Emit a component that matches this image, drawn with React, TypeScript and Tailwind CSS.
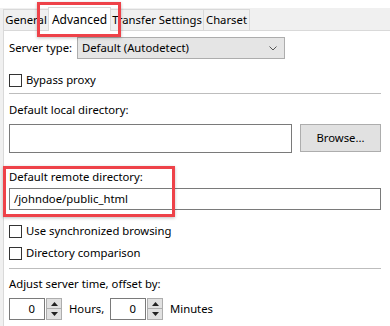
const FONT = { fontFamily: '"Noto Sans", "Open Sans", sans-serif' };

function Checkbox({ label, className = "" }: { label: string; className?: string }) {
  return (
    <div className={`flex h-[16px] items-center ${className}`}>
      <span className="h-[13px] w-[13px] border border-[#333333] bg-white" />
      <span className="ml-[4px] leading-[16px]">{label}</span>
    </div>
  );
}

function Spinner({ value }: { value: string }) {
  return (
    <div className="flex h-[22px]">
      <div className="flex h-[22px] w-[36px] items-center justify-end border border-[#7a7a7a] bg-white pr-[9px]">
        {value}
      </div>
      <div className="ml-[1px] flex w-[16px] flex-col">
        <div className="flex h-[11px] items-center justify-center border border-[#adadad] bg-[#e1e1e1]">
          <svg width="7" height="4" viewBox="0 0 7 4">
            <path d="M3.5 0L7 4H0z" fill="#222" />
          </svg>
        </div>
        <div className="flex h-[11px] items-center justify-center border border-t-0 border-[#adadad] bg-[#e1e1e1]">
          <svg width="7" height="4" viewBox="0 0 7 4">
            <path d="M0 0h7L3.5 4z" fill="#222" />
          </svg>
        </div>
      </div>
    </div>
  );
}

export default function App() {
  const tabs = [
    { name: "General", w: "w-[46px]" },
    { name: "Advanced", w: "w-[63px]", active: true },
    { name: "Transfer Settings", w: "w-[94px]" },
    { name: "Charset", w: "w-[47px]" },
  ];

  return (
    <div className="relative h-[326px] w-[390px] overflow-hidden bg-white text-[11.3px] text-black" style={FONT}>
      <div className="mt-[8px] h-[318px] bg-[#f0f0f0] pl-[3px]">
        {/* tab strip */}
        <div className="flex h-[22px] items-end">
          {tabs.map((t) =>
            t.active ? (
              <div
                key={t.name}
                className={`relative z-10 -mt-[2px] -ml-[1px] flex h-[24px] ${t.w} -mb-[1px] items-center justify-center whitespace-nowrap border border-b-0 border-[#d9d9d9] bg-white text-[12px] leading-[16px]`}
              >
                {t.name}
              </div>
            ) : (
              <div
                key={t.name}
                className={`flex h-[21px] ${t.w} -ml-[1px] first:ml-0 items-center justify-center whitespace-nowrap border border-b-0 border-[#d9d9d9] bg-[#f0f0f0] leading-[16px]`}
              >
                {t.name}
              </div>
            )
          )}
        </div>

        {/* panel */}
        <div className="h-[300px] border-l border-t border-[#d9d9d9] bg-white pl-[5px] pr-[9px] pt-[6px]">
          <div className="flex h-[22px] items-center">
            <span className="w-[68px] leading-[16px]">Server type:</span>
            <div className="flex h-[22px] w-[208px] items-center justify-between border border-[#adadad] bg-[#e5e5e5] pl-[4px] pr-[7px]">
              <span>Default (Autodetect)</span>
              <svg width="8" height="5" viewBox="0 0 8 5">
                <path d="M0.5 0.5L4 4L7.5 0.5" fill="none" stroke="#555" strokeWidth="1" />
              </svg>
            </div>
          </div>

          <Checkbox label="Bypass proxy" className="mt-[13px]" />

          <div className="mt-[5px] h-px bg-[#bdbdbd]" />

          <div className="mt-[8px] h-[16px] leading-[16px]">Default local directory:</div>
          <div className="mt-[6px] flex h-[29px]">
            <div className="h-[29px] flex-1 border border-[#7a7a7a] bg-white" />
            <div className="ml-[8px] flex h-[28px] w-[81px] items-center justify-center border border-[#adadad] bg-[#e1e1e1]">
              Browse...
            </div>
          </div>

          <div className="mt-[16px] h-[16px] leading-[16px]">Default remote directory:</div>
          <div className="mt-[3px] flex h-[22px] items-center border border-[#7a7a7a] bg-white pl-[4px]">
            /johndoe/public_html
          </div>

          <Checkbox label="Use synchronized browsing" className="mt-[13px]" />
          <Checkbox label="Directory comparison" className="mt-[6px]" />

          <div className="mt-[7px] h-px bg-[#bdbdbd]" />

          <div className="mt-[7px] h-[16px] leading-[16px]">Adjust server time, offset by:</div>
          <div className="mt-[6px] flex h-[22px] items-center">
            <Spinner value="0" />
            <span className="ml-[7px] w-[41px]">Hours,</span>
            <Spinner value="0" />
            <span className="ml-[7px]">Minutes</span>
          </div>
        </div>
      </div>

      {/* annotation highlights */}
      <div className="pointer-events-none absolute left-[37px] top-[2px] h-[35px] w-[84px] border-[3px] border-[#ee4249] shadow-[0_1px_3px_rgba(0,0,0,0.25)]" />
      <div className="pointer-events-none absolute left-[3px] top-[166px] h-[51px] w-[172px] border-[3px] border-[#ee4249] shadow-[0_1px_3px_rgba(0,0,0,0.25)]" />
    </div>
  );
}
